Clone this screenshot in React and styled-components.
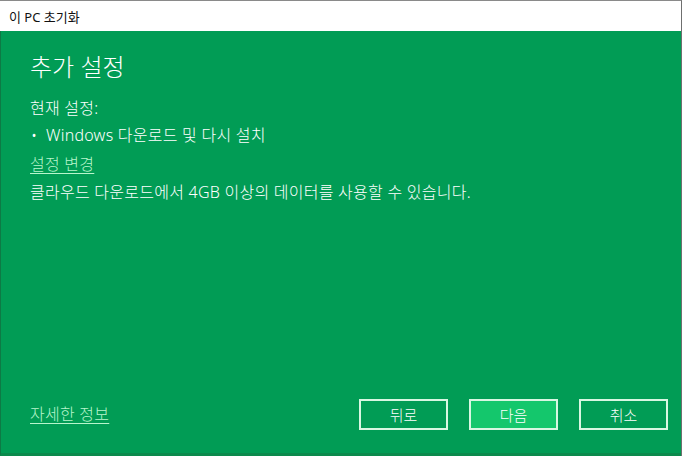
import styled, { createGlobalStyle } from "styled-components";

const GlobalStyle = createGlobalStyle`
  html, body {
    margin: 0;
    padding: 0;
    background: #ffffff;
  }
  * {
    box-sizing: border-box;
  }
`;

const FONT = `"Segoe UI", "Noto Sans", "Noto Sans CJK KR", sans-serif`;

function App() {
  return (
    <>
      <GlobalStyle />
      <Window>
        <TitleBar>이 PC 초기화</TitleBar>
        <Body>
          <Content>
            <Heading>추가 설정</Heading>
            <Text>현재 설정:</Text>
            <Bullet>Windows 다운로드 및 다시 설치</Bullet>
            <Link>설정 변경</Link>
            <Text>클라우드 다운로드에서 4GB 이상의 데이터를 사용할 수 있습니다.</Text>
          </Content>
          <Footer>
            <Link>자세한 정보</Link>
            <Buttons>
              <Button>뒤로</Button>
              <Button $primary>다음</Button>
              <Button>취소</Button>
            </Buttons>
          </Footer>
        </Body>
      </Window>
    </>
  );
}

const Window = styled.div`
  width: 682px;
  height: 456px;
  display: flex;
  flex-direction: column;
  font-family: ${FONT};
  border-top: 1px solid #8a8a8a;
  border-right: 1px solid #6f6f6f;
  overflow: hidden;
`;

const TitleBar = styled.div`
  height: 30px;
  background: #ffffff;
  color: #111;
  font-size: 13px;
  padding: 0 9px;
  display: flex;
  align-items: center;
`;

const Body = styled.div`
  flex: 1;
  background: #019c55;
  border-left: 1px solid #0d7a45;
  border-bottom: 3px solid #0b8a4c;
  display: flex;
  flex-direction: column;
  justify-content: space-between;
  padding: 18px 13px 23px 29px;
  color: #ffffff;
`;

const Content = styled.div`
  display: flex;
  flex-direction: column;
`;

const Heading = styled.h1`
  margin: 0 0 10px;
  font-size: 24px;
  font-weight: 300;
  line-height: 36px;
`;

const Text = styled.div`
  font-size: 16px;
  font-weight: 300;
  letter-spacing: 0.25px;
  line-height: 26px;
  & + & {
    line-height: 28px;
  }
`;

const Bullet = styled(Text)`
  padding-left: 16px;
  position: relative;
  &::before {
    content: "•";
    position: absolute;
    left: 1px;
  }
`;

const Link = styled.span`
  align-self: flex-start;
  font-size: 16px;
  font-weight: 300;
  letter-spacing: 0.25px;
  line-height: 30px;
  color: #b8f5cc;
  text-decoration: underline;
  text-underline-offset: 3px;
  text-decoration-thickness: 1px;
`;

const Footer = styled.div`
  display: flex;
  align-items: center;
  justify-content: space-between;
`;

const Buttons = styled.div`
  display: flex;
  gap: 21px;
`;

const Button = styled.button`
  width: 89px;
  height: 31px;
  border: 2px solid #d8f7e2;
  background: ${(p) => (p.$primary ? "#14c76c" : "transparent")};
  color: #ffffff;
  font-family: ${FONT};
  font-size: 15px;
  font-weight: 300;
  padding: 0;
`;

export default App;
